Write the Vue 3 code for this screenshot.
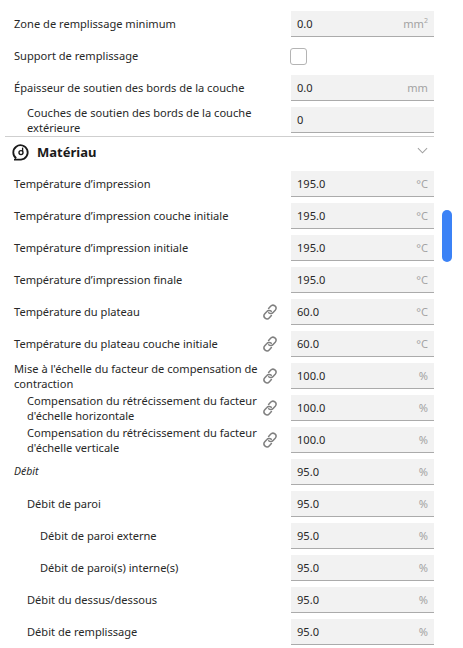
<template>
  <div class="panel">
    <div class="scroll-thumb"></div>
    <div class="list">
      <div
        v-for="row in topRows"
        :key="row.label"
        class="row"
        :class="'level-' + (row.level || 0)"
      >
        <span class="label">{{ row.label }}</span>
        <span v-if="row.check" class="checkbox"></span>
        <div v-else class="field">
          <span>{{ row.value }}</span>
          <span class="unit" v-html="row.unit"></span>
        </div>
      </div>

      <div class="section-head">
        <svg class="section-icon" viewBox="0 0 18 18" width="18" height="18">
          <path
            d="M4.2 15.2A7.2 7.2 0 1 1 9 16.6H2"
            fill="none"
            stroke="#1a1a1a"
            stroke-width="1.8"
          />
          <circle cx="9" cy="9.6" r="2" fill="none" stroke="#1a1a1a" stroke-width="1.4" />
          <path d="M10.6 8.4 10.6 4.6" stroke="#1a1a1a" stroke-width="1.3" />
        </svg>
        <span class="section-title">Matériau</span>
        <svg class="chevron" viewBox="0 0 12 7" width="11" height="7">
          <path d="M1 1l5 5 5-5" fill="none" stroke="#a0a0a0" stroke-width="1.1" />
        </svg>
      </div>

      <div
        v-for="row in materialRows"
        :key="row.label"
        class="row"
        :class="'level-' + (row.level || 0)"
      >
        <span class="label" :class="{ italic: row.italic }">{{ row.label }}</span>
        <svg v-if="row.link" class="link" viewBox="0 0 16 16" width="16" height="16">
          <path
            d="M6.6 4.4 8.6 2.2a3 3 0 0 1 4.6 4l-2.1 2.3a3 3 0 0 1-4.4.2"
            fill="none"
            stroke="#808080"
            stroke-width="1.5"
            stroke-linecap="round"
          />
          <path
            d="M9.4 11.6 7.4 13.8a3 3 0 0 1-4.6-4l2.1-2.3a3 3 0 0 1 4.4-.2"
            fill="none"
            stroke="#808080"
            stroke-width="1.5"
            stroke-linecap="round"
          />
        </svg>
        <div class="field">
          <span>{{ row.value }}</span>
          <span class="unit">{{ row.unit }}</span>
        </div>
      </div>
    </div>
  </div>
</template>

<script setup>
const topRows = [
  { label: "Zone de remplissage minimum", value: "0.0", unit: "mm<sup>2</sup>" },
  { label: "Support de remplissage", check: true },
  { label: "Épaisseur de soutien des bords de la couche", value: "0.0", unit: "mm" },
  { label: "Couches de soutien des bords de la couche extérieure", value: "0", unit: "", level: 1 },
];

const materialRows = [
  { label: "Température d’impression", value: "195.0", unit: "°C" },
  { label: "Température d’impression couche initiale", value: "195.0", unit: "°C" },
  { label: "Température d’impression initiale", value: "195.0", unit: "°C" },
  { label: "Température d’impression finale", value: "195.0", unit: "°C" },
  { label: "Température du plateau", value: "60.0", unit: "°C", link: true },
  { label: "Température du plateau couche initiale", value: "60.0", unit: "°C", link: true },
  { label: "Mise à l'échelle du facteur de compensation de contraction", value: "100.0", unit: "%", link: true },
  { label: "Compensation du rétrécissement du facteur d'échelle horizontale", value: "100.0", unit: "%", link: true, level: 1 },
  { label: "Compensation du rétrécissement du facteur d'échelle verticale", value: "100.0", unit: "%", link: true, level: 1 },
  { label: "Débit", value: "95.0", unit: "%", italic: true },
  { label: "Débit de paroi", value: "95.0", unit: "%", level: 1 },
  { label: "Débit de paroi externe", value: "95.0", unit: "%", level: 2 },
  { label: "Débit de paroi(s) interne(s)", value: "95.0", unit: "%", level: 2 },
  { label: "Débit du dessus/dessous", value: "95.0", unit: "%", level: 1 },
  { label: "Débit de remplissage", value: "95.0", unit: "%", level: 1 },
];
</script>

<style>
html,
body {
  background: #fff;
  overflow: hidden;
}
</style>

<style scoped>
.panel {
  position: relative;
  width: 463px;
  height: 648px;
  overflow: hidden;
  font-family: "Noto Sans", "Open Sans", sans-serif;
  font-size: 11.1px;
  color: #282828;
  background: #fff;
}

.list {
  width: 434px;
  padding-top: 8px;
  padding-left: 5px;
  box-sizing: border-box;
}

.row {
  display: flex;
  align-items: center;
  height: 32px;
  padding-left: 9px;
  position: relative;
}

.row.level-1 {
  padding-left: 22px;
}

.row.level-2 {
  padding-left: 35px;
}

.label {
  flex: 1;
  min-width: 0;
  padding-right: 32px;
  padding-bottom: 1px;
  line-height: 15px;
}

.row.level-1 .label,
.row.level-2 .label {
  padding-right: 30px;
}

.label.italic {
  font-style: italic;
  font-size: 10.5px;
}

.field {
  width: 143px;
  height: 26px;
  box-sizing: border-box;
  flex: none;
  display: flex;
  align-items: center;
  justify-content: space-between;
  padding: 0 6px;
  background: #f2f2f2;
  border-bottom: 1px solid #ababab;
}

.unit {
  color: #a3a3a3;
}

.unit :deep(sup) {
  font-size: 7px;
  line-height: 0;
}

.checkbox {
  width: 15px;
  height: 15px;
  flex: none;
  margin-right: 127px;
  border: 1px solid #b4b4b4;
  border-radius: 3px;
}

.link {
  position: absolute;
  left: 257px;
  top: 8px;
}

.section-head {
  display: flex;
  align-items: center;
  height: 32px;
  box-sizing: border-box;
  padding: 0 6px 2px 7px;
  border-top: 1px solid #cfcfcf;
}

.section-icon {
  flex: none;
}

.section-title {
  margin-left: 7px;
  font-size: 13px;
  font-weight: 700;
  color: #1a1a1a;
}

.chevron {
  margin-left: auto;
  margin-bottom: 2px;
}

.scroll-thumb {
  position: absolute;
  left: 442px;
  top: 210px;
  width: 10px;
  height: 52px;
  border-radius: 5px;
  background: #3b82f6;
}
</style>
